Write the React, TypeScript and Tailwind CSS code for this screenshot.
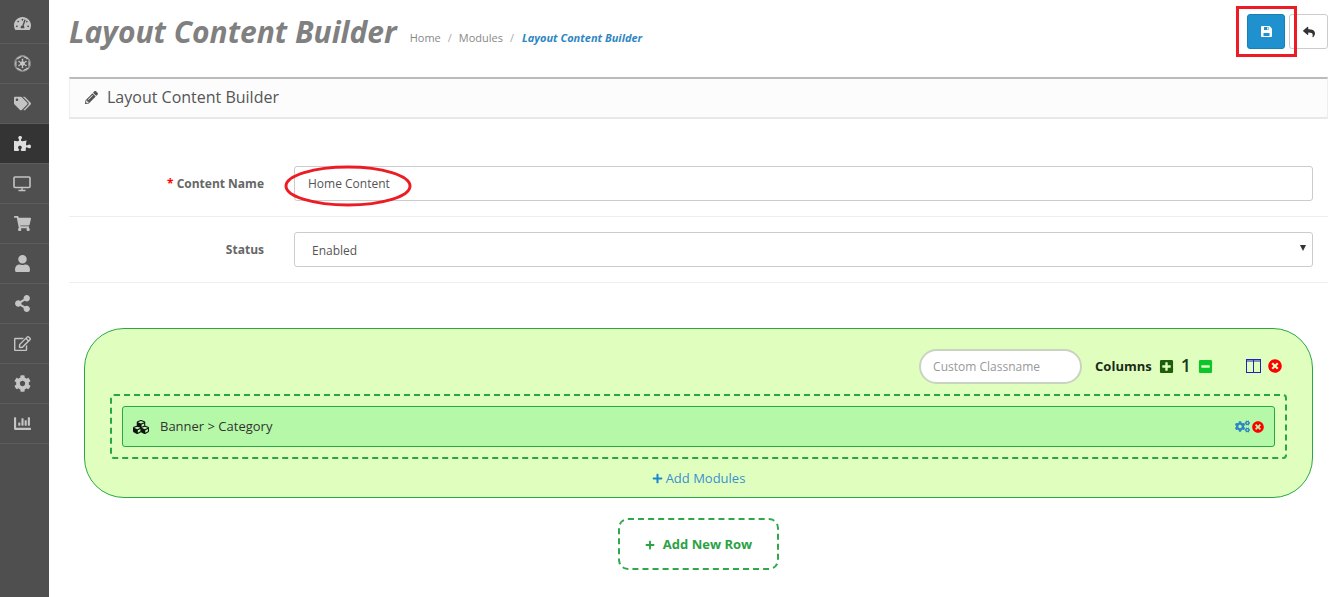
import {
  FaTachometerAlt, FaEmpire, FaTags, FaPuzzlePiece, FaShoppingCart, FaUser, FaShareAlt,
  FaRegEdit, FaCog, FaChartBar, FaPencilAlt, FaReply, FaPlusSquare, FaMinusSquare,
  FaTimesCircle, FaCogs, FaCubes, FaPlus,
} from 'react-icons/fa';

function MonitorIcon() {
  return (
    <svg width="18" height="16" viewBox="0 0 18 16" fill="none" stroke="currentColor">
      <rect x="1" y="1" width="16" height="10.5" rx="1" strokeWidth="1.6" />
      <path d="M9 12v2.5M5.5 14.5h7" strokeWidth="1.4" />
    </svg>
  );
}

function ColumnsIcon() {
  return (
    <svg width="15" height="14" viewBox="0 0 15 14" fill="none" stroke="#2222bb" className="mb-[1px] ml-[33px]">
      <rect x="0.5" y="0.5" width="14" height="13" />
      <path d="M7.5 0.5v13M0.5 2h14" />
    </svg>
  );
}

function FloppyIcon() {
  return (
    <svg width="11" height="11" viewBox="0 0 11 11">
      <path d="M1 0h7.5L11 2.5V10a1 1 0 0 1-1 1H1a1 1 0 0 1-1-1V1a1 1 0 0 1 1-1z" fill="#fff" />
      <path d="M3 1h4.5v3H3z" fill="#1f91cf" />
      <path d="M6 1.5h1v2H6z" fill="#fff" />
      <path d="M2.5 7h6v3h-6z" fill="#1f91cf" />
    </svg>
  );
}

const navItems = [
  { icon: FaTachometerAlt },
  { icon: FaEmpire },
  { icon: FaTags },
  { icon: FaPuzzlePiece, active: true },
  { icon: MonitorIcon },
  { icon: FaShoppingCart },
  { icon: FaUser },
  { icon: FaShareAlt },
  { icon: FaRegEdit },
  { icon: FaCog },
  { icon: FaChartBar },
];

export default function App() {
  return (
    <div className="relative flex h-[597px] w-[1343px] overflow-hidden bg-white font-['Open_Sans',sans-serif] text-[#666]">
      {/* Sidebar */}
      <div className="flex w-[49px] shrink-0 flex-col bg-[#4f4f4f] pt-1">
        {navItems.map((item, i) => (
          <div
            key={i}
            className={`flex h-10 items-center justify-center border-b border-[#5c5c5c] pr-[5px] text-[17px] ${
              item.active ? 'bg-[#343434] text-[#e0e0e0]' : 'text-[#c4c4c4]'
            }`}
          >
            <item.icon />
          </div>
        ))}
      </div>

      {/* Main */}
      <div className="flex-1 pl-5 pr-[15px]">
        {/* Page head */}
        <div className="flex h-[77px] items-start justify-between">
          <div className="flex items-baseline pt-[10px]">
            <h1 className="text-[30px] font-bold italic leading-[44px] text-[#808080]">Layout Content Builder</h1>
            <div className="relative top-[-1px] ml-[13px] flex items-center text-[11px] text-[#888]">
              <span>Home</span>
              <span className="mx-[7px] text-[#aaa]">/</span>
              <span>Modules</span>
              <span className="ml-[7px] mr-[8px] text-[#aaa]">/</span>
              <span className="font-bold italic text-[#2f86c4]">Layout Content Builder</span>
            </div>
          </div>
          <div className="mt-[14px] flex gap-[4px]">
            <button className="flex h-[35px] w-[38px] items-center justify-center rounded-[3px] border border-[#1a7fb5] bg-[#1f91cf]">
              <FloppyIcon />
            </button>
            <button className="flex h-[35px] w-[39px] items-center justify-center rounded-[3px] border border-[#ccc] bg-white text-[12px] text-[#333]">
              <FaReply />
            </button>
          </div>
        </div>

        {/* Panel heading */}
        <div className="flex h-[42px] items-center gap-[9px] border-x border-t-2 border-b-2 border-x-[#eee] border-t-[#bbb] border-b-[#e8e8e8] bg-[#fcfcfc] pb-[2px] pl-[15px] text-[16px] text-[#555]">
          <FaPencilAlt className="text-[13px]" />
          <span>Layout Content Builder</span>
        </div>

        {/* Form */}
        <div className="mt-[47px] flex h-[51px] border-b border-[#eee] pr-[15px]">
          <label className="w-[195px] pt-[9px] text-right text-[12px] font-bold text-[#666]">
            <span className="text-[#f00]">* </span>Content Name
          </label>
          <input
            readOnly
            value="Home Content"
            className="ml-[30px] h-[35px] flex-1 rounded-[3px] border border-[#ccc] px-[13px] text-[12px] text-[#555] outline-none"
          />
        </div>
        <div className="flex h-[66px] items-center border-b border-[#eee] pr-[15px]">
          <label className="w-[195px] text-right text-[12px] font-bold text-[#666]">Status</label>
          <div className="relative ml-[30px] flex h-[35px] flex-1 items-center rounded-[3px] border border-[#ccc] pl-[17px] pt-[2px] text-[12px] text-[#555]">
            Enabled
            <span className="absolute right-[6px] top-[12px] border-x-[3px] border-t-[6px] border-x-transparent border-t-[#333]" />
          </div>
        </div>

        {/* Layout row */}
        <div className="ml-[15px] mr-[15px] mt-[45px] h-[170px] rounded-[40px] border border-[#28a745] bg-[#e0ffbe] px-[25px]">
          <div className="flex h-[65px] items-center justify-end pr-[5px] pt-[10px]">
            <div className="flex h-[35px] w-[163px] items-center rounded-full border-2 border-[#c8d4c0] bg-white pl-[12px] text-[12px] text-[#999]">
              Custom Classname
            </div>
            <span className="ml-[13px] text-[13px] font-bold text-[#1a2a1a]">Columns</span>
            <FaPlusSquare className="mb-[1px] ml-[7px] text-[15px] text-[#1f5c0c]" />
            <span className="mb-[3px] ml-[7px] text-[18px] font-semibold leading-none text-[#1a3a1a]">1</span>
            <FaMinusSquare className="mb-[1px] ml-[7px] text-[15px] text-[#0cc42c]" />
            <ColumnsIcon />
            <FaTimesCircle className="mb-[1px] ml-[7px] text-[14px] text-[#f00]" />
          </div>
          <div className="rounded-[4px] border-2 border-dashed border-[#28a745] p-[10px]">
            <div className="flex h-[41px] items-center rounded-[3px] border border-[#28a745] bg-[#b5f9a8] pl-[10px] pr-[10px] text-[13px] text-[#333]">
              <FaCubes className="text-[16px] text-[#111]" />
              <span className="ml-[11px] flex-1">Banner &gt; Category</span>
              <FaCogs className="text-[15px] text-[#2f86c4]" />
              <FaTimesCircle className="ml-[2px] text-[12px] text-[#f00]" />
            </div>
          </div>
          <div className="mt-[10px] flex items-center justify-center gap-[3px] text-[13px] text-[#3b8fd0]">
            <FaPlus className="text-[11px] text-[#1f86cf]" />
            <span>Add Modules</span>
          </div>
        </div>

        {/* Add row */}
        <div className="mt-5 flex justify-center">
          <div className="flex h-[52px] w-[161px] items-center justify-center gap-[8px] rounded-[10px] border-2 border-dashed border-[#2da84a] pt-[1px] text-[13px] font-bold text-[#2ba245]">
            <FaPlus className="text-[10px]" />
            <span>Add New Row</span>
          </div>
        </div>
      </div>

      {/* Annotations over the screenshot */}
      <div className="absolute left-[1236px] top-[6px] h-[51px] w-[61px] border-[3px] border-[#ed1c24]" />
      <svg className="absolute left-[283px] top-[164px]" width="130" height="44" viewBox="0 0 130 44">
        <ellipse cx="65" cy="22" rx="62" ry="19" fill="none" stroke="#ed1c24" strokeWidth="3" />
      </svg>
    </div>
  );
}
